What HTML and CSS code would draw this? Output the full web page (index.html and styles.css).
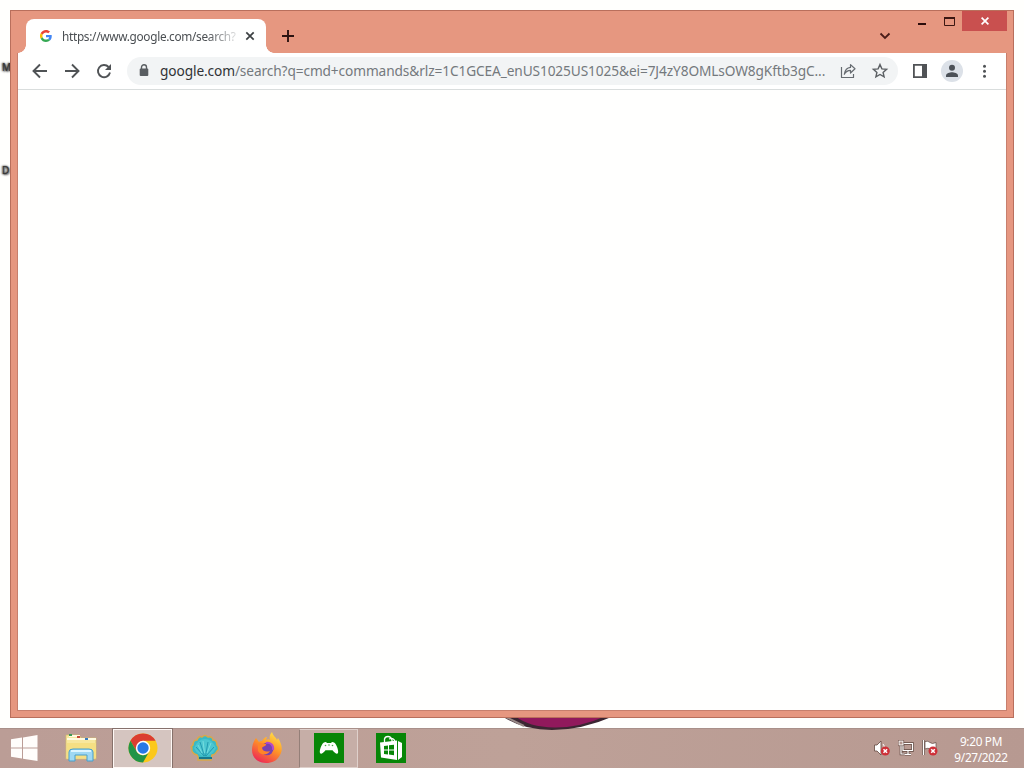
FILE: index.html
```html
<!DOCTYPE html>
<html lang="en">
<head>
<meta charset="utf-8">
<title>Desktop</title>
<link rel="stylesheet" href="styles.css">
</head>
<body>
<main class="desktop">
  <span class="shortcut shortcut-m">M</span>
  <span class="shortcut shortcut-d">D</span>
  <svg class="wallpaper" width="112" height="16" viewBox="0 0 112 16"><path d="M0 0Q20 14 50 14T112 0Z" fill="#3b2632"/><path d="M13 0Q27 11 52 11.500T104 0Z" fill="#91195c"/><path d="M4 1L22 10" stroke="#998a87" stroke-width="2"/></svg>

  <section class="window">
    <header class="titlebar">
      <div class="tab">
        <svg class="favicon" width="12" height="12" viewBox="0 0 48 48"><path fill="#ea4335" d="M24 9.500c3.540 0 6.710 1.220 9.210 3.600l6.850-6.850C35.900 2.380 30.470 0 24 0 14.620 0 6.510 5.380 2.560 13.220l7.980 6.190C12.430 13.720 17.740 9.500 24 9.500z"/><path fill="#4285f4" d="M46.980 24.550c0-1.570-.15-3.090-.38-4.550H24v9.020h12.940c-.58 2.960-2.260 5.480-4.780 7.180l7.730 6c4.510-4.180 7.090-10.360 7.090-17.650z"/><path fill="#fbbc05" d="M10.530 28.590A14.500 14.500 0 0 1 10.530 19.410L2.560 13.220a24 24 0 0 0 0 21.560z"/><path fill="#34a853" d="M24 48c6.480 0 11.930-2.130 15.890-5.810l-7.730-6c-2.150 1.450-4.920 2.300-8.160 2.300-6.260 0-11.570-4.220-13.470-9.910l-7.980 6.190C6.510 42.620 14.620 48 24 48z"/></svg>
        <span class="tab-title">https://www.google.com/search?</span>
        <svg class="tab-close" width="10" height="10" viewBox="0 0 10 10"><path d="M1.300 1.300l7.400 7.400M8.700 1.300L1.300 8.700" stroke="#3c4043" stroke-width="1.700"/></svg>
      </div>
      <svg class="new-tab" width="12" height="12" viewBox="0 0 12 12"><path d="M6 0v12M0 6h12" stroke="#2c1210" stroke-width="1.900"/></svg>
      <svg class="tab-search" width="12" height="8" viewBox="0 0 12 8"><path d="M1.500 1.500L6 6l4.500-4.500" fill="none" stroke="#4a1d18" stroke-width="1.800"/></svg>
      <div class="controls">
        <svg class="minimize" width="8" height="3" viewBox="0 0 8 3"><path d="M0 2h8" stroke="#2c0c0a" stroke-width="2"/></svg>
        <svg class="maximize" width="11" height="9" viewBox="0 0 11 9"><path d="M.5 1.200h10v7.300H.5z" fill="none" stroke="#3c1712"/><path d="M0 1h11" stroke="#3c1712" stroke-width="2"/></svg>
        <div class="close"><svg width="8" height="8" viewBox="0 0 8 8"><path d="M.6.600l6.800 6.800M7.400.600L.6 7.400" stroke="#fff" stroke-width="1.700"/></svg></div>
      </div>
    </header>
    <div class="page">
      <nav class="toolbar">
        <svg class="tool" viewBox="0 0 32 32"><path d="M23 16H10M16 9.500L9.500 16l6.500 6.500" fill="none" stroke="#505356" stroke-width="1.900"/></svg>
        <svg class="tool" viewBox="0 0 32 32"><path d="M9 16h13M16 9.500l6.500 6.500-6.500 6.500" fill="none" stroke="#505356" stroke-width="1.900"/></svg>
        <svg class="tool" viewBox="0 0 32 32"><path d="M20.600 12A6.100 6.100 0 1 0 22 17.500" fill="none" stroke="#505356" stroke-width="1.900"/><path d="M23 9v6h-6z" fill="#505356"/></svg>
        <div class="address">
          <svg class="lock" width="10" height="13" viewBox="0 0 10 13"><path d="M2.500 5V3.300a2.500 2.500 0 0 1 5 0V5" fill="none" stroke="#5a5e62" stroke-width="1.400"/><rect x=".7" y="4.500" width="8.600" height="7.500" rx="1" fill="#5a5e62"/></svg>
          <span class="url"><b>google.com</b>/search?q=cmd+commands&amp;rlz=1C1GCEA_enUS1025US1025&amp;ei=7J4zY8OMLsOW8gKftb3gC...</span>
          <svg class="tool share" viewBox="0 0 32 32"><path d="M9.500 12v10.500h12V19M12.300 19.300c.7-4.200 2.700-6.600 6.200-6.900V9.600l4.500 4.200-4.500 4.200v-2.700c-2.600 0-4.700 1.300-6.200 4z" fill="none" stroke="#666b70" stroke-width="1.200" stroke-linejoin="round"/></svg>
          <svg class="tool" viewBox="0 0 32 32"><path d="M16 9.600l1.900 4.300 4.700.400-3.500 3.100 1 4.500-4.100-2.400-4.100 2.400 1-4.500-3.500-3.100 4.700-.4z" fill="none" stroke="#5b5f63" stroke-width="1.400"/></svg>
        </div>
        <svg class="tool" viewBox="0 0 32 32"><path d="M9.900 9.900h12.200v12.200H9.900z" fill="none" stroke="#505356" stroke-width="1.800"/><path d="M18 9h5v14h-5z" fill="#505356"/></svg>
        <svg class="tool" viewBox="0 0 32 32"><circle cx="16" cy="16" r="11" fill="#dce1e8"/><circle cx="16" cy="12.800" r="3" fill="#4c5158"/><path d="M10 22v-1.500c0-2.200 4-3.300 6-3.300s6 1.100 6 3.300V22z" fill="#4c5158"/></svg>
        <svg class="tool" viewBox="0 0 32 32"><g fill="#505356"><circle cx="16.500" cy="11.300" r="1.500"/><circle cx="16.500" cy="16.300" r="1.500"/><circle cx="16.500" cy="21.300" r="1.500"/></g></svg>
      </nav>
    </div>
  </section>

  <footer class="taskbar">
    <div class="start"><svg width="28" height="28" viewBox="0 0 28 28"><path d="M1 5.200L12 3.600V13.500H1zM13 3.400L27.500 1V13.500H13zM1 14.500H12V24.500L1 22.800zM13 14.500H27.500V27L13 24.700z" fill="#fffdfb"/></svg></div>
    <div class="task">
      <svg width="32" height="30" viewBox="0 0 32 30"><path d="M1 2h13l2 3h15v21H1z" fill="#f7e79d" stroke="#d9bd68" stroke-width=".7"/><path d="M2 6h29M4 3h11M19 6h10" stroke="#fffbe0" stroke-width="2"/><path d="M4 2h3" stroke="#3b9a56" stroke-width="2"/><path d="M12 4h3" stroke="#c74b38" stroke-width="2"/><path d="M20 6h3" stroke="#377cc0" stroke-width="2"/><path d="M2 10h29v15H2z" fill="#f5df83"/><path d="M4 28V19q0-3 4-3h16q4 0 4 3v9h-6v-6H10v6z" fill="#9ed8f3" stroke="#479fcb"/><path d="M6 18h20" stroke="#dcf5ff" stroke-width="2"/></svg>
    </div>
    <div class="task active">
      <svg width="30" height="30" viewBox="0 0 30 30"><circle cx="15" cy="15" r="14.500" fill="#fbc81b"/><path d="M2.440 7.750A14.500 14.500 0 0 1 27.560 7.750H15L8.700 18.600z" fill="#db3d31"/><path d="M2.440 7.750A14.500 14.500 0 0 0 15 29.500L21.300 18.600A7.200 7.200 0 0 1 8.700 18.600z" fill="#229447"/><circle cx="15" cy="15" r="7.200" fill="#fff"/><circle cx="15" cy="15" r="5.700" fill="#2779e6"/></svg>
    </div>
    <div class="task">
      <svg width="30" height="28" viewBox="0 0 30 28"><path d="M8 26v-3l-1-2C3 20 1 17 2 14l-1-1 2-2c0-3 1-5 4-5 1-3 3-4 5-3 2-2 4-2 6 0 3-1 5 1 5 3 3 0 4 2 4 5 2 2 2 5 0 6-1 2-3 4-5 4l-1 5z" fill="#3ab9c5" stroke="#d9a849" stroke-width="1.500"/><path d="M4 14Q8 5 15 5t11 9Q22 22 15 22T4 14" fill="#4bc6d0"/><path d="M14 22L6 13M14.500 22L10 8M15.500 22L18 8M16 22l8-9" fill="none" stroke="#2499b0" stroke-width="1"/><path d="M12 19L8 11M14.500 19L13 7M17 19l4-10" stroke="#82e2e2" stroke-width=".8"/><path d="M9 23h13v2H9z" fill="#18788e"/></svg>
    </div>
    <div class="task">
      <svg width="32" height="32" viewBox="0 0 32 32"><defs><linearGradient id="flame" x1=".8" y1="0" x2=".25" y2="1"><stop stop-color="#ffe44b"/><stop offset=".45" stop-color="#ff9826"/><stop offset="1" stop-color="#ed2556"/></linearGradient></defs><path d="M5 6l3 4c1-1 2-1 3-1 1-2 3-4 5-4l-1 3c2-1 3-1 4 0-1-3 0-6 2-8 1 4 4 5 5 8l1-2c4 6 5 12 2 17-3 6-8 8-14 8C6 31 1 25 1 18c0-4 1-8 4-12z" fill="url(#flame)"/><circle cx="16" cy="17" r="6.300" fill="#7842b0"/><path d="M7 12c3-2 5 0 8 0 1 2-3 2-4 4 1 4 5 4 8 3-2 4-9 5-12 0z" fill="#ff8428"/><path d="M15 11c4-1 8 2 7 7" fill="none" stroke="#b44ac7" stroke-width="2"/></svg>
    </div>
    <div class="task open">
      <svg width="30" height="30" viewBox="0 0 30 30"><path d="M0 0h30v30H0z" fill="#078607"/><path d="M10 9.500q2-1 3 .500h4q1-1.500 3-.5c2 .7 5 8 4 10.500-1 2-3 0-5.500-2.800h-7C9 20 7 22 6 20 5 17.500 8 10.200 10 9.500z" fill="#fff"/><g fill="#4ba64b"><circle cx="11.500" cy="12.500" r=".8"/><circle cx="18.500" cy="12.500" r=".8"/><circle cx="15" cy="12" r=".8"/></g></svg>
    </div>
    <div class="task">
      <svg width="30" height="30" viewBox="0 0 30 30"><path d="M0 0h30v30H0z" fill="#078607"/><path d="M8.500 9V6q.5-2.500 3.500-2.500T16 7v2M13 6q5-2 6 3" fill="none" stroke="#fff" stroke-width="1.300"/><path d="M4 9.500L21 7.500V27L5 24.500zM22 8l4 2v14l-4 3z" fill="#fff"/><path d="M8 13l4-.5v4H8zM13 12.300l5-.6v4.800h-5zM8 17.500h4v4l-4-.5zM13 17.500h5v4.700l-5-.6z" fill="#078607"/></svg>
    </div>
    <div class="tray">
      <svg width="16" height="16" viewBox="0 0 16 16"><path d="M.5 5H3l4-4v14l-4-4H.5z" fill="#fff" stroke="#62483f" stroke-width=".8"/><path d="M9 4q2 2 1 4" stroke="#fff" fill="none"/><circle cx="11.300" cy="11" r="4.500" fill="#ce3038"/><path d="M9.500 9.200l3.600 3.600M13.100 9.200l-3.600 3.600" stroke="#fff" stroke-width="1.500"/></svg>
      <svg width="16" height="16" viewBox="0 0 16 16"><path d="M5 3.500h9.500v7H5zM10 10.500V14M6.500 14.300H13M3 5v9h3" fill="none" stroke="#604942" stroke-width="2.600"/><path d="M5 3.500h9.500v7H5zM10 10.500V14M6.500 14.300H13M3 5v9h3" fill="none" stroke="#fff" stroke-width="1.200"/><path d="M1 1h4v4H1z" fill="#b1968e" stroke="#fff"/><path d="M.3.300h5.400v5.400H.3z" fill="none" stroke="#604942" stroke-width=".5"/></svg>
      <svg width="17" height="16" viewBox="0 0 17 16"><path d="M1.500 0v15" stroke="#604942" stroke-width="2.600"/><path d="M1.500 0v15" stroke="#fff" stroke-width="1.300"/><path d="M3 1.500q3-1 5 1t6 0v7q-3 1-5.500-.5T3 9z" fill="#fff" stroke="#604942" stroke-width=".7"/><circle cx="11" cy="11" r="4.500" fill="#ce3038"/><path d="M9.200 9.200l3.600 3.600M12.800 9.200l-3.600 3.600" stroke="#fff" stroke-width="1.500"/></svg>
    </div>
    <div class="clock"><span>9:20 PM</span><span class="date">9/27/2022</span></div>
  </footer>
</main>
</body>
</html>
```
FILE: styles.css
```css
* { box-sizing: border-box; }
body { margin: 0; font-family: "Noto Sans", "Open Sans", sans-serif; }
svg { display: block; flex: none; }
.desktop { position: relative; width: 1024px; height: 768px; overflow: hidden; background: #fffffd; display: flex; flex-direction: column; justify-content: flex-end; }
.shortcut { position: absolute; left: 2px; width: 12px; height: 12px; font-size: 10px; line-height: 12px; color: #333; text-shadow: 0 0 2px #222, 1px 1px 2px #444, -1px 0 2px #777; }
.shortcut-m { top: 61px; }
.shortcut-d { top: 164px; }
.wallpaper { position: absolute; left: 502px; top: 716px; z-index: 1; }
.window { position: absolute; z-index: 2; left: 10px; top: 10px; width: 1004px; height: 708px; background: #e69780; border: 1px solid #b96f5c; padding: 0 7px 6px; display: flex; flex-direction: column; }
.titlebar { height: 42px; flex: none; display: flex; align-items: flex-start; }
.tab { position: relative; width: 240px; height: 34px; margin: 8px 0 0 8px; padding: 0 11px 0 14px; background: #fff; border-radius: 8px 8px 0 0; display: flex; align-items: center; }
.tab::before, .tab::after { content: ""; position: absolute; bottom: 0; width: 8px; height: 8px; }
.tab::before { left: -8px; background: radial-gradient(circle at 0 0, transparent 7.5px, #fff 8px); }
.tab::after { right: -8px; background: radial-gradient(circle at 100% 0, transparent 7.5px, #fff 8px); }
.tab-title { width: 176px; margin-left: 10px; white-space: nowrap; font-size: 11.8px; line-height: 18px; letter-spacing: -0.3px; color: #4b4f53; -webkit-mask-image: linear-gradient(90deg, #000 145px, transparent 180px); mask-image: linear-gradient(90deg, #000 145px, transparent 180px); }
.tab-close { margin-left: auto; }
.new-tab { margin: 19px 0 0 16px; }
.tab-search { margin: 21px 0 0 585px; }
.controls { margin: 0 -1px 0 auto; display: flex; align-items: flex-start; }
.minimize { margin-top: 11px; }
.maximize { margin: 6px 7px 0 18px; }
.close { width: 45px; height: 20px; background: #c9504f; display: flex; align-items: center; justify-content: center; }
.page { flex: 1; background: #fffffe; border: 1px solid #c77f6d; border-top: 0; margin: 0 -1px 0 -1px; }
.toolbar { height: 37px; padding: 0 5px 1px 6px; background: #fff; border-bottom: 1px solid #d9dddd; display: flex; align-items: center; }
.tool { width: 32px; height: 32px; }
.address { width: 771px; height: 28px; margin: 0 6px 0 7px; padding: 0 2px 0 12px; border-radius: 14px; background: #f2f4f5; display: flex; align-items: center; }
.url { width: 672px; margin-left: 11px; white-space: nowrap; font-size: 13.7px; line-height: 20px; letter-spacing: -0.11px; color: #74797d; }
.url b { font-weight: 400; color: #303336; }
.share { margin-left: auto; }
.taskbar { height: 40px; flex: none; border-top: 1px solid #a99089; background: linear-gradient(90deg, #bb9d96, #bea198 50%, #b79991); display: flex; gap: 3px; }
.start { width: 48px; padding-bottom: 1px; display: flex; align-items: center; justify-content: center; }
.task { width: 59px; height: 39px; padding-bottom: 1px; display: flex; align-items: center; justify-content: center; }
.active { background: #d5c5c0; border: 1px solid #fff8f5; outline: 1px solid #86716b; }
.open { background: #c6aea7; border: 1px solid #dfd0cb; border-left-color: #947f78; }
.tray { margin-left: auto; padding-bottom: 1px; display: flex; gap: 8px; align-items: center; }
.clock { width: 82px; padding: 4px 4px 0 0; display: flex; flex-direction: column; align-items: center; font-size: 11.8px; line-height: 16px; letter-spacing: -0.3px; color: #fff; }
```
